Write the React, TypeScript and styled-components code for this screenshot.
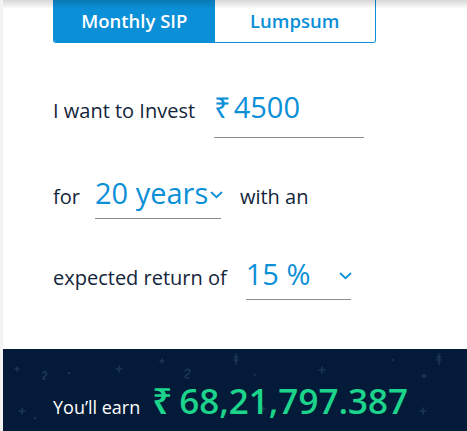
import React from "react"
import styled, { createGlobalStyle } from "styled-components"

const GlobalStyle = createGlobalStyle`
    html, body {
        margin: 0;
        padding: 0;
        background: #ffffff;
        font-family: "Open Sans", "Noto Sans", sans-serif;
    }
`;

const BLUE = "#0b8fd7";
const INK = "#13253a";

const Page = styled.div`
    width: 467px;
    height: 431px;
    display: flex;
    flex-direction: column;
    border-left: 3px solid #f3f3f3;
    box-sizing: border-box;
    overflow: hidden;
    position: relative;
`;

const TopShade = styled.div`
    position: absolute;
    left: 0;
    right: 0;
    top: 0;
    height: 9px;
    background: linear-gradient(rgba(0, 0, 0, 0.16), rgba(0, 0, 0, 0));
    pointer-events: none;
`;

const Form = styled.div`
    flex: 1;
    padding-left: 50px;
    display: flex;
    flex-direction: column;
`;

const Tabs = styled.div`
    display: flex;
    width: 323px;
    height: 43px;
    box-sizing: border-box;
    border: 1px solid ${BLUE};
    border-top: none;
    border-radius: 0 0 3px 3px;
    overflow: hidden;
`;

const Tab = styled.div<{ $active?: boolean }>`
    flex: 1;
    display: flex;
    align-items: center;
    justify-content: center;
    padding-bottom: 2px;
    font-size: 18.5px;
    font-weight: 600;
    color: ${p => (p.$active ? "#ffffff" : BLUE)};
    background: ${p => (p.$active ? BLUE : "#ffffff")};
`;

const Row = styled.div<{ $top: number }>`
    display: flex;
    align-items: baseline;
    margin-top: ${p => p.$top}px;
    font-size: 20px;
    color: ${INK};
    white-space: nowrap;
`;

const Label = styled.span<{ $gap?: number; $lead?: number }>`
    margin-right: ${p => p.$gap ?? 0}px;
    margin-left: ${p => p.$lead ?? 0}px;
`;

const Field = styled.span<{ $width: number; $below: number }>`
    display: inline-flex;
    flex-shrink: 0;
    align-items: baseline;
    width: ${p => p.$width}px;
    padding-bottom: ${p => p.$below}px;
    border-bottom: 1px solid #8c8c8c;
    font-size: 29px;
    color: ${BLUE};
    line-height: 1;
`;

const Value = styled.span``;

const Rupee = styled.span<{ $gap: number }>`
    font-family: "Noto Sans", "Open Sans", sans-serif;
    margin-right: ${p => p.$gap}px;
`;

const Chevron = styled.svg<{ $push?: boolean }>`
    width: 13px;
    height: 8px;
    flex-shrink: 0;
    align-self: center;
    margin-top: 5px;
    margin-left: ${p => (p.$push ? "auto" : "2px")};
    margin-right: ${p => (p.$push ? "-1px" : "0")};
`;

const Earn = styled.div`
    height: 82px;
    background: #031b38;
    position: relative;
    display: flex;
    align-items: baseline;
    padding: 34px 0 0 50px;
    box-sizing: border-box;
    overflow: hidden;
    white-space: nowrap;
`;

const Sparkles = styled.svg`
    position: absolute;
    left: 0;
    top: 0;
    width: 100%;
    height: 100%;
`;

const EarnLabel = styled.span`
    font-size: 18px;
    color: #ffffff;
    margin-right: 12px;
    position: relative;
`;

const EarnValue = styled.span`
    font-size: 35px;
    font-weight: 600;
    color: #1cd48b;
    position: relative;
    line-height: 1;
`;

const Down = ({ push }: { push?: boolean }) => (
    <Chevron $push={push} viewBox="0 0 13 8">
        <path d="M1.5 1.5 L6.5 6.2 L11.5 1.5" fill="none" stroke={BLUE} strokeWidth="1.8" strokeLinecap="round" />
    </Chevron>
);

const plus = (x: number, y: number, s: number) =>
    `M${x - s} ${y}H${x + s}M${x} ${y - s}V${y + s}`;

export default function App() {
    return <>
        <GlobalStyle />
        <Page>
            <TopShade />
            <Form>
                <Tabs>
                    <Tab $active>Monthly SIP</Tab>
                    <Tab>Lumpsum</Tab>
                </Tabs>
                <Row $top={49}>
                    <Label $gap={19}>I want to Invest</Label>
                    <Field $width={150} $below={16}>
                        <Value><Rupee $gap={3}>₹</Rupee>4500</Value>
                    </Field>
                </Row>
                <Row $top={40}>
                    <Label $gap={15}>for</Label>
                    <Field $width={126} $below={11}>
                        <Value>20 years</Value>
                        <Down />
                    </Field>
                    <Label $lead={19}>with an</Label>
                </Row>
                <Row $top={40}>
                    <Label $gap={19}>expected return of</Label>
                    <Field $width={105} $below={11}>
                        <Value>15 %</Value>
                        <Down push />
                    </Field>
                </Row>
            </Form>
            <Earn>
                <Sparkles viewBox="0 0 464 82">
                    <g stroke="#1d3556" strokeWidth="1.6" strokeLinecap="round" fill="none">
                        <path d={plus(14, 20, 2)} />
                        <path d={plus(116, 20, 3)} />
                        <path d={plus(159, 12, 2)} />
                        <path d={plus(319, 21, 3)} />
                        <path d={plus(421, 27, 2)} />
                        <path d={plus(19, 62, 3)} />
                        <path d={plus(420, 62, 3)} />
                        <path d={plus(260, 60, 2)} />
                        <path d="M40 24c3-3 5 1 2 3s-3 4 0 3" />
                        <path d="M182 22c4-4 7 0 3 3s-4 4 1 4" />
                        <path d="M233 5v10M231 8h4M231 11h4" />
                        <path d="M436 5v10M434 8h4M434 11h4" />
                    </g>
                    <g fill="#1d3556">
                        <circle cx="66" cy="24" r="1.3" />
                        <circle cx="32" cy="69" r="1.3" />
                        <circle cx="252" cy="26" r="1.1" />
                        <circle cx="390" cy="11" r="1.1" />
                    </g>
                </Sparkles>
                <EarnLabel>You’ll earn</EarnLabel>
                <EarnValue><Rupee $gap={7}>₹</Rupee>68,21,797.387</EarnValue>
            </Earn>
        </Page>
    </>;
}
